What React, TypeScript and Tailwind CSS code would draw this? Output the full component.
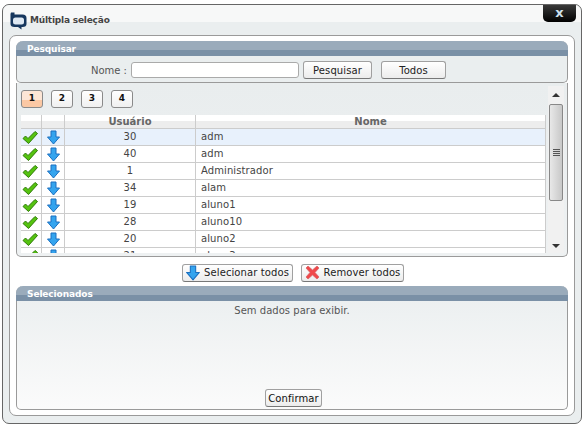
const font = { fontFamily: '"DejaVu Sans", Verdana, sans-serif' };

function Check() {
  return (
    <svg width="16" height="15" viewBox="0 0 16 14" className="block -ml-[2px]">
      <path d="M1 8 L3.5 5.5 L6 8 L13 1 L15.5 3 L6.5 13 Z" fill="#55c30f" stroke="#2f7a08" strokeWidth="1" strokeLinejoin="round" />
    </svg>
  );
}

function Arrow({ w = 13, h = 15 }: { w?: number; h?: number }) {
  return (
    <svg width={w} height={h} viewBox="0 0 13 15" className="block">
      <path d="M4 1 H9 V7 H12.5 L6.5 14 L0.5 7 H4 Z" fill="#34a4ee" stroke="#1a6fc0" strokeWidth="1" strokeLinejoin="round" />
    </svg>
  );
}

function RedX() {
  return (
    <svg width="15" height="15" viewBox="0 0 15 15" className="block">
      <path d="M1 3 L3 1 L7.5 5 L12 1 L14 3 L10 7.5 L14 12 L12 14 L7.5 10 L3 14 L1 12 L5 7.5 Z" fill="#f0484a" stroke="#d8666a" strokeWidth="0.8" strokeLinejoin="round" />
    </svg>
  );
}

function Logo() {
  return (
    <svg width="19" height="18" viewBox="0 0 18 18" className="block">
      <path d="M1.5 0.5 H5 V2.5 H13 Q17 2.5 17 6 V12 Q17 15 13 15 H12 V17.5 L8.5 15 H5 Q1 15 1 12 V2 Z" fill="#17375e" />
      <rect x="3.5" y="5.5" width="11" height="7" rx="2.5" fill="#dfe9f3" />
    </svg>
  );
}

function Header({ title }: { title: string }) {
  return (
    <div className="h-[15px] rounded-t-[7px] pl-[11px] pt-[1px] text-[9px] font-bold leading-[14px] tracking-[-0.1px] text-white bg-[linear-gradient(#9aabbb_0%,#9aabbb_60%,#7a90a6_60%,#7a90a6_100%)]">
      {title}
    </div>
  );
}

const rows: [string, string][] = [
  ['30', 'adm'],
  ['40', 'adm'],
  ['1', 'Administrador'],
  ['34', 'alam'],
  ['19', 'aluno1'],
  ['28', 'aluno10'],
  ['20', 'aluno2'],
  ['21', 'aluno3'],
];

function Tab({ n, active }: { n: number; active?: boolean }) {
  return (
    <div
      className={`flex h-[18px] w-[22px] items-center justify-center rounded-[3px] border border-[#8a8a8a] text-[9px] font-bold text-[#111] ${
        active ? 'bg-[linear-gradient(#fde6d6_0%,#fde6d6_55%,#fbc8a4_55%,#fbc8a4_100%)]' : 'bg-[linear-gradient(#ffffff,#f0f0f0)]'
      }`}
    >
      {n}
    </div>
  );
}

function Btn({ children, className }: { children: React.ReactNode; className: string }) {
  return (
    <div className={`flex items-center justify-center rounded-[3px] border border-[#a0a0a0] border-b-[#777] bg-[linear-gradient(#ffffff,#ececec)] text-[10px] tracking-[0.1px] text-[#222] ${className}`}>
      {children}
    </div>
  );
}

export default function App() {
  return (
    <div className="h-[429px] w-[586px] bg-white pl-[2px] pt-[4px] text-[10px] text-[#444]" style={font}>
      <div className="relative flex h-[420px] w-[580px] flex-col rounded-[7px] border border-[#666] bg-[#eaeeef]">
        <div className="flex h-[17px] items-center gap-[2px] rounded-t-[7px] bg-[#f7f8f8] pl-[6px]">
          <div className="mt-[14px]"><Logo /></div>
          <span className="mt-[14px] text-[9px] font-bold tracking-[-0.2px] text-[#444]">Múltipla seleção</span>
        </div>
        <div className="absolute right-[5px] top-0 flex h-[17px] w-[33px] items-center justify-center rounded-b-[5px] bg-[linear-gradient(#3a3a3a,#000)] pb-[2px] text-[13px] font-bold leading-none text-[#cfe0ee]">
          x
        </div>

        <div className="mx-[6px] mt-[13px] flex h-[381px] flex-col rounded-[7px] border border-[#9a9a9a] bg-white px-[6px] pt-[5px]">
          <div className="rounded-[7px] rounded-b-[5px] border border-t-0 border-[#9a9a9a] bg-[#eaeeef]">
            <div className="-mx-px"><Header title="Pesquisar" /></div>
            <div className="flex h-[26px] items-center pl-[70px] pt-[2px]">
              <span className="w-[40px] whitespace-nowrap text-right tracking-[0px] text-[#555]">Nome :</span>
              <div className="ml-[4px] h-[16px] w-[168px] rounded-[3px] border border-[#aaa] bg-white" />
              <Btn className="ml-[4px] h-[18px] w-[69px]">Pesquisar</Btn>
              <Btn className="ml-[9px] h-[18px] w-[65px]">Todos</Btn>
            </div>
          </div>

          <div className="relative h-[174px] overflow-hidden rounded-b-[5px] border border-t-0 border-[#9a9a9a] bg-[linear-gradient(#e9edee,#eef1f2)]">
            <div className="flex gap-[8px] pl-[4px] pt-[7px]">
              <Tab n={1} active />
              <Tab n={2} />
              <Tab n={3} />
              <Tab n={4} />
            </div>
            <div className="ml-[4px] mt-[7px] h-[138px] w-[525px] overflow-hidden bg-white">
              <div className="flex h-[14px] border-b border-[#ccc] bg-[linear-gradient(#fff_0%,#fff_45%,#ededed_45%,#ededed_100%)] text-[10px] font-bold leading-[14px] text-[#666]">
                <div className="w-[21px] border-r border-[#ccc]" />
                <div className="w-[23px] border-r border-[#ccc]" />
                <div className="w-[131px] border-r border-[#ccc] text-center">Usuário</div>
                <div className="flex-1 border-r border-[#ccc] text-center">Nome</div>
              </div>
              {rows.map(([id, name], i) => (
                <div key={i} className={`flex h-[17px] border-b border-[#ccc] text-[10px] leading-[16px] tracking-[0.1px] text-[#444] ${i === 0 ? 'bg-[#e8f1fc]' : 'bg-white'}`}>
                  <div className="flex w-[21px] items-center justify-center border-r border-[#ccc]"><Check /></div>
                  <div className="flex w-[23px] items-center justify-center border-r border-[#ccc]"><Arrow /></div>
                  <div className="w-[131px] border-r border-[#ccc] text-center">{id}</div>
                  <div className="flex-1 border-r border-[#ccc] pl-[5px]">{name}</div>
                </div>
              ))}
            </div>
            <div className="absolute bottom-[3px] right-[3px] top-[3px] w-[16px] bg-[#f1f1f1]">
              <div className="flex h-[18px] items-center justify-center">
                <div className="h-0 w-0 border-x-[4px] border-b-[4px] border-x-transparent border-b-[#333]" />
              </div>
              <div className="mx-px flex h-[97px] items-center justify-center rounded-[2px] border border-[#888] bg-[linear-gradient(90deg,#e8e8e8,#c8c8c8)]">
                <div className="flex w-[7px] flex-col gap-px">
                  <div className="h-px bg-[#555]" />
                  <div className="h-px bg-[#555]" />
                  <div className="h-px bg-[#555]" />
                  <div className="h-px bg-[#555]" />
                </div>
              </div>
              <div className="absolute bottom-[5px] left-0 right-0 flex justify-center">
                <div className="h-0 w-0 border-x-[4px] border-t-[4px] border-x-transparent border-t-[#333]" />
              </div>
            </div>
          </div>

          <div className="flex h-[29px] items-center pl-[166px] pt-[2px]">
            <Btn className="h-[18px] w-[111px] gap-[4px]"><Arrow w={14} h={16} /><span>Selecionar todos</span></Btn>
            <Btn className="ml-[8px] h-[18px] w-[103px] gap-[4px]"><RedX /><span>Remover todos</span></Btn>
          </div>

          <div className="flex h-[124px] flex-col rounded-[7px] rounded-b-[5px] border border-t-0 border-[#9a9a9a] bg-[linear-gradient(#eaeeef,#fbfbfb)]">
            <div className="-mx-px"><Header title="Selecionados" /></div>
            <div className="pt-[2px] text-center tracking-[0.03px] text-[#555]">Sem dados para exibir.</div>
            <div className="mt-auto flex justify-center pb-[2px] pl-[3px]">
              <Btn className="h-[18px] w-[57px] !text-[#111]">Confirmar</Btn>
            </div>
          </div>
        </div>
      </div>
    </div>
  );
}
